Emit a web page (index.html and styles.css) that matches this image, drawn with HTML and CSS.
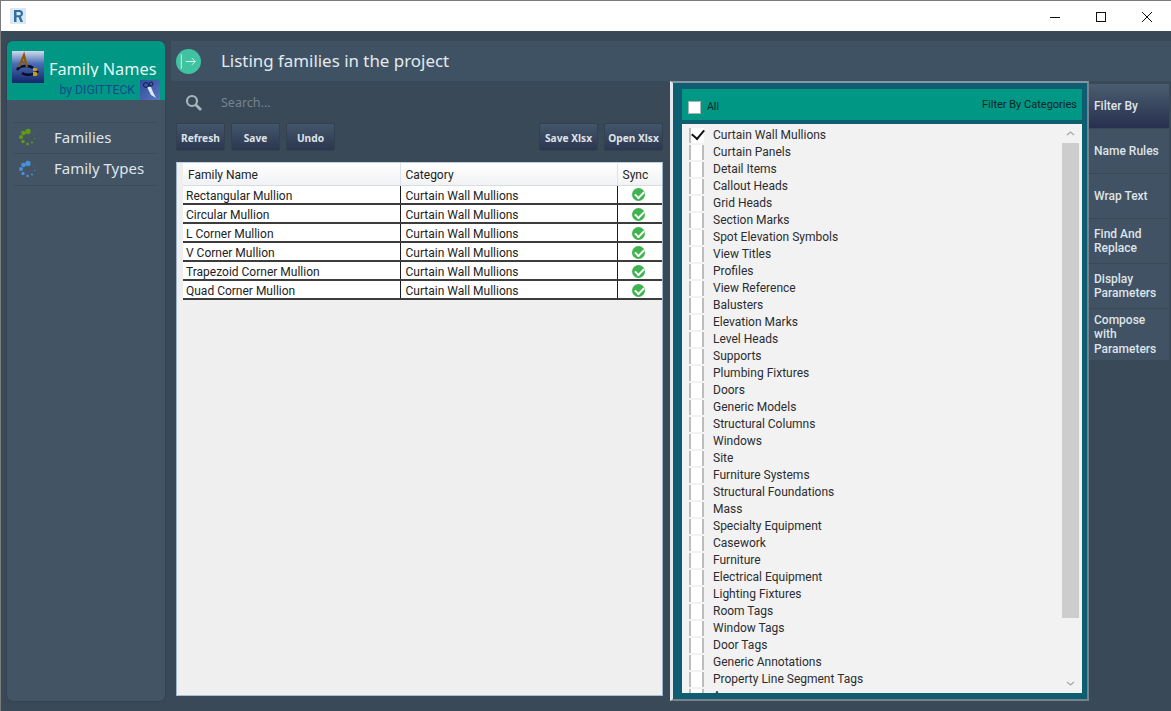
FILE: index.html
```html
<!DOCTYPE html>
<html lang="en">
<head>
<meta charset="utf-8">
<title>Family Names</title>
<link rel="stylesheet" href="styles.css">
</head>
<body>
<div class="window">
  <header class="titlebar">
    <svg class="app-icon" width="16" height="16" viewBox="0 0 16 16"><rect width="16" height="16" fill="#dbe7f3"/><path d="M4 2h5.500a3.500 3.500 0 0 1 1.400 6.700L13 14h-2.600L8.600 9.300H6.500V14H4z M6.500 4v3.300h2.700a1.650 1.650 0 0 0 0-3.300z" fill="#2f6fa8" fill-rule="evenodd"/></svg>
    <div class="winctl">
      <svg width="14" height="14" viewBox="0 0 14 14"><path d="M2 7.500h10" stroke="#111" fill="none"/></svg>
      <svg width="14" height="14" viewBox="0 0 14 14"><rect x="2.500" y="2.500" width="9" height="9" stroke="#111" fill="none"/></svg>
      <svg width="14" height="14" viewBox="0 0 14 14"><path d="M2 2l10 10M12 2L2 12" stroke="#111" fill="none"/></svg>
    </div>
  </header>
  <div class="app">
    <aside class="sidebar">
      <div class="brand">
        <svg class="logo" width="32" height="32" viewBox="0 0 32 32"><defs><linearGradient id="lg" x1="0" y1="0" x2="0" y2="1"><stop offset="0" stop-color="#cfd9ec"/><stop offset=".4" stop-color="#4a6cb4"/><stop offset="1" stop-color="#12266a"/></linearGradient></defs><rect width="32" height="32" fill="url(#lg)"/><path d="M5 19c3-5 13-5 16-2M26 20c-3 4-12 5-16 2" stroke="#080d26" stroke-width="2.500" fill="none"/><path d="M7 16L12 4l3 12M9 11h5" stroke="#8a5a10" stroke-width="2.200" fill="none"/><path d="M21 17h3c2 0 2 3 0 3h-3zM21 21h3c2 0 2 4 0 4h-3z" fill="#c69a20"/></svg>
        <div class="brand-title">Family Names</div>
        <div class="brand-by">by DIGITTECK
          <svg width="20" height="20" viewBox="0 0 20 20"><defs><linearGradient id="lg2" x1="0" y1="0" x2="1" y2="1"><stop offset="0" stop-color="#2d4c9c"/><stop offset="1" stop-color="#5a78bc"/></linearGradient></defs><rect width="20" height="20" fill="url(#lg2)"/><path d="M7 7l4 8 5 3-3-6-2-5z" fill="#dfe6f4"/><circle cx="6" cy="5" r="2.500" stroke="#101c50" fill="none"/><circle cx="11" cy="4" r="2" stroke="#101c50" fill="none"/></svg>
        </div>
      </div>
      <nav class="nav">
        <div class="nav-item">
          <svg class="spin" width="20" height="20" viewBox="0 0 20 20" fill="#5f9c12"><circle cx="10" cy="3.500" r="2.700"/><circle cx="5.500" cy="5" r="2.300"/><circle cx="3" cy="9" r="2"/><circle cx="5" cy="13.500" r="1.700"/><circle cx="9.500" cy="16" r="1.300"/><circle cx="14" cy="14.500" r="1"/><circle cx="16.500" cy="10.500" r=".6"/><circle cx="15.500" cy="6" r=".4"/></svg>
          <span>Families</span>
        </div>
        <div class="nav-item">
          <svg class="spin" width="20" height="20" viewBox="0 0 20 20" fill="#4a90d8"><circle cx="10" cy="3.500" r="2.700"/><circle cx="5.500" cy="5" r="2.300"/><circle cx="3" cy="9" r="2"/><circle cx="5" cy="13.500" r="1.700"/><circle cx="9.500" cy="16" r="1.300"/><circle cx="14" cy="14.500" r="1"/><circle cx="16.500" cy="10.500" r=".6"/><circle cx="15.500" cy="6" r=".4"/></svg>
          <span>Family Types</span>
        </div>
      </nav>
    </aside>
    <div class="main">
      <div class="topbar">
        <svg class="go" width="25" height="25" viewBox="0 0 26 26"><circle cx="13" cy="13" r="13" fill="#3fc3a0"/><path d="M5.500 5.500v15M10 13h10M16.500 9.500L20 13l-3.500 3.500" stroke="#d8f2ea" fill="none"/></svg>
        <h1 class="heading">Listing families in the project</h1>
      </div>
      <div class="content">
        <section class="left">
          <div class="search">
            <svg width="18" height="18" viewBox="0 0 18 18"><circle cx="7" cy="7" r="5" stroke="#aab4bd" stroke-width="2.200" fill="none"/><path d="M10.800 10.800L16 16" stroke="#aab4bd" stroke-width="2.800" fill="none"/></svg>
            <span>Search...</span>
          </div>
          <div class="toolbar">
            <button class="btn">Refresh</button>
            <button class="btn">Save</button>
            <button class="btn">Undo</button>
            <button class="btn wide push">Save Xlsx</button>
            <button class="btn wide">Open Xlsx</button>
          </div>
          <div class="grid">
            <table>
              <thead><tr><th>Family Name</th><th>Category</th><th>Sync</th></tr></thead>
              <tbody>
                <tr><td>Rectangular Mullion</td><td>Curtain Wall Mullions</td><td><i class="ok"></i></td></tr>
                <tr><td>Circular Mullion</td><td>Curtain Wall Mullions</td><td><i class="ok"></i></td></tr>
                <tr><td>L Corner Mullion</td><td>Curtain Wall Mullions</td><td><i class="ok"></i></td></tr>
                <tr><td>V Corner Mullion</td><td>Curtain Wall Mullions</td><td><i class="ok"></i></td></tr>
                <tr><td>Trapezoid Corner Mullion</td><td>Curtain Wall Mullions</td><td><i class="ok"></i></td></tr>
                <tr><td>Quad Corner Mullion</td><td>Curtain Wall Mullions</td><td><i class="ok"></i></td></tr>
              </tbody>
            </table>
          </div>
        </section>
        <section class="filter">
          <div class="filter-head">
            <span class="box"></span><span class="all">All</span>
            <span class="fb">Filter By Categories</span>
          </div>
          <div class="listwrap">
            <ul class="list">
              <li class="checked"><b></b>Curtain Wall Mullions</li>
              <li><b></b>Curtain Panels</li>
              <li><b></b>Detail Items</li>
              <li><b></b>Callout Heads</li>
              <li><b></b>Grid Heads</li>
              <li><b></b>Section Marks</li>
              <li><b></b>Spot Elevation Symbols</li>
              <li><b></b>View Titles</li>
              <li><b></b>Profiles</li>
              <li><b></b>View Reference</li>
              <li><b></b>Balusters</li>
              <li><b></b>Elevation Marks</li>
              <li><b></b>Level Heads</li>
              <li><b></b>Supports</li>
              <li><b></b>Plumbing Fixtures</li>
              <li><b></b>Doors</li>
              <li><b></b>Generic Models</li>
              <li><b></b>Structural Columns</li>
              <li><b></b>Windows</li>
              <li><b></b>Site</li>
              <li><b></b>Furniture Systems</li>
              <li><b></b>Structural Foundations</li>
              <li><b></b>Mass</li>
              <li><b></b>Specialty Equipment</li>
              <li><b></b>Casework</li>
              <li><b></b>Furniture</li>
              <li><b></b>Electrical Equipment</li>
              <li><b></b>Lighting Fixtures</li>
              <li><b></b>Room Tags</li>
              <li><b></b>Window Tags</li>
              <li><b></b>Door Tags</li>
              <li><b></b>Generic Annotations</li>
              <li><b></b>Property Line Segment Tags</li>
              <li><b></b>Areas</li>
            </ul>
            <div class="scroll">
              <svg width="17" height="19" viewBox="0 0 17 19"><path d="M5 11l3.500-3 3.500 3" stroke="#a8a8a8" stroke-width="1.300" fill="none"/></svg>
              <div class="thumb"></div>
              <svg class="down" width="17" height="19" viewBox="0 0 17 19"><path d="M5 8l3.500 3 3.500-3" stroke="#a8a8a8" stroke-width="1.300" fill="none"/></svg>
            </div>
          </div>
        </section>
        <nav class="tabs">
          <div class="tab active">Filter By</div>
          <div class="tab">Name Rules</div>
          <div class="tab">Wrap Text</div>
          <div class="tab">Find And Replace</div>
          <div class="tab">Display Parameters</div>
          <div class="tab">Compose with Parameters</div>
        </nav>
      </div>
    </div>
  </div>
</div>
</body>
</html>
```
FILE: styles.css
```css
* { box-sizing: border-box; }
html, body { margin: 0; padding: 0; width: 1171px; height: 711px; overflow: hidden; }
body { font-family: "Roboto", "Liberation Sans", sans-serif; background: #fff; }
.window { width: 1171px; height: 711px; display: flex; flex-direction: column; border-top: 1px solid #7b7b7b; border-left: 1px solid #7b7b7b; }
.titlebar { height: 30px; background: #fff; display: flex; align-items: center; justify-content: space-between; padding: 0 2px 0 9px; flex: none; }
.app-icon { margin-top: -1px; }
.winctl { display: flex; gap: 32px; padding-right: 15px; margin-top: 1px; }
.app { flex: 1; min-height: 0; background: #394958; display: flex; padding: 10px 0 10px 6px; }
.sidebar { width: 158px; flex: none; background: #435565; border-radius: 6px; box-shadow: 0 0 2px rgba(30,40,50,.6); overflow: hidden; }
.brand { height: 59px; background: #009784; display: grid; grid-template-columns: 37px 1fr; grid-template-rows: 36px 23px; padding-left: 5px; color: #e6f5f2; }
.logo { margin-top: 10px; grid-column: 1; grid-row: 1 / 3; }
.brand-title { grid-column: 2; grid-row: 1; font-family: "Noto Sans", sans-serif; font-size: 16.300px; line-height: 20px; margin-top: 18px; height: 18px; overflow: hidden; white-space: nowrap; }
.brand-by { grid-column: 1 / 3; grid-row: 2; justify-self: end; display: flex; align-items: center; gap: 5px; font-size: 12.200px; color: #17498f; height: 20px; margin: 3px 5px 0 0; }
.nav { margin: 22px 8px 0 7px; }
.nav-item { height: 31px; display: flex; align-items: center; border-top: 1px solid #3b4b5a; font-family: "Noto Sans", sans-serif; font-size: 15px; color: #dfe5ea; padding-left: 4px; }
.nav-item:last-child { border-bottom: 1px solid #3b4b5a; height: 33px; }
.nav-item span { margin: 0 0 3px 16px; }
.main { flex: 1; min-width: 0; display: flex; flex-direction: column; margin-left: 6px; }
.topbar { height: 40px; flex: none; background: #3f5264; display: flex; align-items: center; padding-left: 5px; }
.heading { margin: -2px 0 0 20px; font-family: "Noto Sans", sans-serif; font-weight: 400; font-size: 16.900px; color: #e4e9ed; }
.content { flex: 1; min-height: 0; display: flex; }
.left { width: 499px; flex: none; display: flex; flex-direction: column; padding: 0 7px 5px 5px; }
.search { height: 42px; flex: none; display: flex; align-items: center; padding: 1px 0 0 9px; gap: 18px; font-family: "Noto Sans", sans-serif; font-size: 12.500px; color: #77838e; }
.toolbar { display: flex; gap: 6px; flex: none; height: 28px; }
.btn { width: 49px; height: 28px; padding: 1px 0 0; border: 1px solid #324050; border-radius: 2px; background: linear-gradient(#43566a, #2c3650); color: #dde3e8; font-family: "Noto Sans", "Liberation Sans", sans-serif; font-weight: 700; font-size: 10.200px; }
.btn.wide { width: 59px; }
.btn.push { margin-left: auto; }
.grid { flex: 1; min-height: 0; margin-top: 11px; background: #efefef; border: 1px solid #9db4cc; border-bottom-color: #a9bdd2; padding-left: 6px; border-top-color: #c0d0e0; }
table { width: 479px; border-collapse: collapse; table-layout: fixed; background: #fff; font-size: 12px; color: #222; }
th { height: 22px; font-weight: 400; text-align: left; padding: 2px 0 0 5px; background: linear-gradient(#fff, #f1f2f4); border-right: 1px solid #dfe3e8; border-bottom: 1px solid #d8dde2; }
th:nth-child(1), td:nth-child(1) { width: 217px; }
th:nth-child(2), td:nth-child(2) { width: 217px; }
td { height: 19px; padding: 3px 0 0 3px; border-right: 1px solid #1c1c1c; border-bottom: 2px solid #3c3c3c; white-space: nowrap; line-height: 14px; }
td:nth-child(2) { padding-left: 5px; }
td:last-child, th:last-child { border-right: 0; }
td:last-child { padding: 1px 3px 0 0; }
.ok { display: block; width: 13px; height: 13px; margin: 0 auto; border-radius: 50%; background: #3fb34f; position: relative; }
.ok::after { content: ""; position: absolute; left: 3px; top: 3px; width: 7px; height: 4px; border-left: 2px solid #fff; border-bottom: 2px solid #fff; transform: rotate(-45deg); }
.filter { width: 419px; flex: none; border-left: 3px solid #e6eaee; border-top: 2px solid #8896a3; border-right: 2px solid #76828e; border-bottom: 2px solid #76828e; background: #0e5d70; padding: 6px 5px 6px 9px; display: flex; flex-direction: column; }
.filter-head { height: 31px; flex: none; background: #009784; display: flex; align-items: center; padding: 5px 5px 0 6px; color: #0a2329; font-size: 10.500px; }
.box { width: 13px; height: 13px; background: #fff; border: 1px solid #a4b4b0; margin-right: 6px; }
.fb { margin: -6px 0 0 auto; font-size: 11px; }
.all { margin-top: -1px; }
.listwrap { flex: 1; min-height: 0; margin-top: 4px; background: #f2f2f2; display: flex; overflow: hidden; }
.list { flex: 1; list-style: none; margin: 0; padding: 3px 0 0 7px; font-size: 12px; color: #2c2c30; }
.list li { height: 17px; line-height: 17px; display: flex; align-items: center; white-space: nowrap; }
.list b { width: 15px; height: 15px; border-left: 2px solid #bdbdbd; border-right: 2px solid #bdbdbd; background: #fff; margin-right: 9px; flex: none; }
.list .checked b { position: relative; border-right-color: transparent; }
.list .checked b::after { content: ""; position: absolute; left: 1px; top: 1px; width: 10px; height: 6px; border-left: 2px solid #111; border-bottom: 2px solid #111; transform: rotate(-50deg); }
.scroll { width: 17px; flex: none; display: flex; flex-direction: column; margin-right: 3px; }
.thumb { height: 475px; background: #cdcdcd; }
.down { margin-top: auto; }
.tabs { flex: 1; padding: 3px 2px 0 0; display: flex; flex-direction: column; gap: 1px; }
.tab { height: 44px; background: #405263; display: flex; align-items: center; padding: 0 6px 0 5px; font-weight: 500; font-size: 12px; line-height: 14.300px; color: #dfe4e8; }
.tab.active { background: linear-gradient(#4a5d6f, #28304f); }
.tab:last-child { height: 51px; }
```
